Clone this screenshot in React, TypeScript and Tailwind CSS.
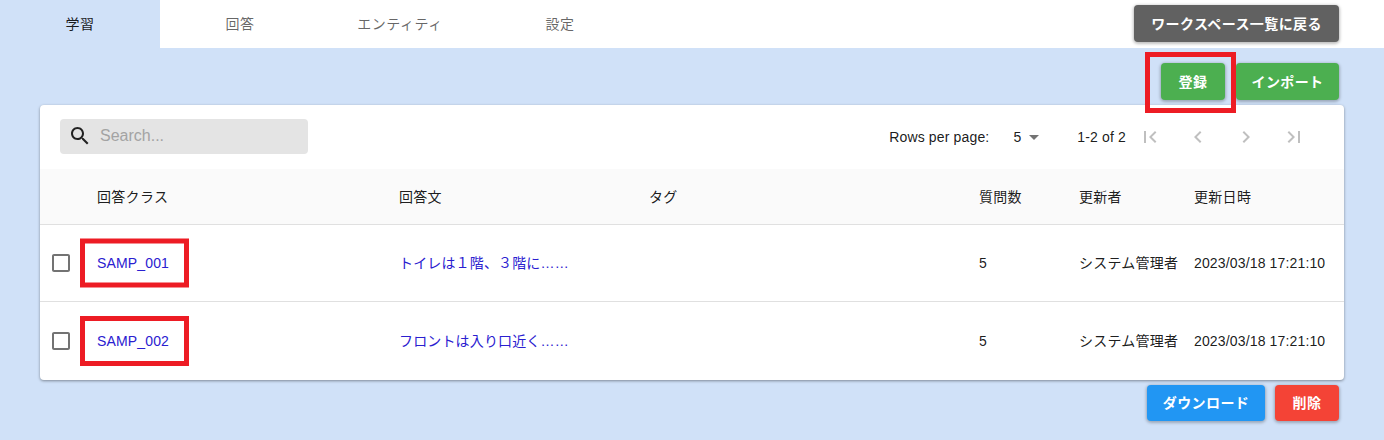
const FONT = "font-['Liberation_Sans','Noto_Sans_CJK_JP',sans-serif]";

const tabs = ["学習", "回答", "エンティティ", "設定"];

const columns = ["回答クラス", "回答文", "タグ", "質問数", "更新者", "更新日時"];

const rows = [
  { id: "SAMP_001", answer: "トイレは１階、３階に……", boxHeight: "h-[49px]" },
  { id: "SAMP_002", answer: "フロントは入り口近く……", boxHeight: "h-[50px]" },
];

const GRID = "grid grid-cols-[57px_302px_250px_330px_100px_115px_1fr] items-center";

function Icon({ d, className }: { d: string; className?: string }) {
  return (
    <svg viewBox="0 0 24 24" className={className} fill="currentColor">
      <path d={d} />
    </svg>
  );
}

const pagerIcons = [
  "M18.41 16.59L13.82 12l4.59-4.59L17 6l-6 6 6 6zM6 6h2v12H6z",
  "M15.41 7.41L14 6l-6 6 6 6 1.41-1.41L10.83 12z",
  "M10 6L8.59 7.41 13.17 12l-4.58 4.59L10 18l6-6z",
  "M5.59 7.41L10.18 12l-4.59 4.59L7 18l6-6-6-6zM16 6h2v12h-2z",
];

function Btn({ label, className }: { label: string; className: string }) {
  return (
    <button
      className={`rounded text-sm font-bold text-white tracking-[0.4px] shadow-[0_1px_3px_1px_rgba(0,0,0,0.25)] ${className}`}
    >
      {label}
    </button>
  );
}

export default function App() {
  return (
    <div className={`${FONT} h-[440px] overflow-hidden bg-[#d0e1f8] text-sm tracking-[0.01071em] text-black/90`}>
      {/* Tabs */}
      <div className="flex h-12 items-start justify-between bg-white pr-[45px]">
        <div className="flex">
          {tabs.map((t, i) => (
            <div
              key={t}
              className={`flex h-12 w-40 items-center justify-center pb-px tracking-[0.5px] ${
                i === 0 ? "bg-[#d0e1f8] text-black/90" : "text-black/60"
              }`}
            >
              {t}
            </div>
          ))}
        </div>
        <Btn label="ワークスペース一覧に戻る" className="mt-[5px] h-[37px] w-[205px] bg-[#616161]" />
      </div>

      {/* Actions */}
      <div className="flex justify-end gap-[11px] pr-[45px] pt-[15px]">
        <div className="relative">
          <Btn label="登録" className="h-[37px] w-16 bg-[#4caf50]" />
          <div className="absolute -left-[16px] -right-[11px] -top-[11px] h-[61px] border-[5px] border-[#ed1c24]" />
        </div>
        <Btn label="インポート" className="h-[37px] w-[103px] bg-[#4caf50]" />
      </div>

      {/* Table card */}
      <div className="ml-10 mr-10 mt-[5px] h-[275px] rounded bg-white shadow-[0_1px_3px_0_rgba(0,0,0,0.4)]">
        <div className="flex h-16 items-center justify-between pl-5 pr-[26px]">
          <div className="mb-0.5 flex h-[35px] w-[248px] items-center rounded bg-[#e4e4e4] pl-2">
            <Icon
              d="M15.5 14h-.79l-.28-.27C15.41 12.59 16 11.11 16 9.5 16 5.91 13.09 3 9.5 3S3 5.91 3 9.5 5.91 16 9.5 16c1.61 0 3.09-.59 4.23-1.57l.27.28v.79l5 4.99L20.49 19l-4.99-5zm-6 0C7.01 14 5 11.99 5 9.5S7.01 5 9.5 5 14 7.01 14 9.5 11.99 14 9.5 14z"
              className="h-6 w-6 text-black/85"
            />
            <span className="ml-2 text-base tracking-normal text-[#a3a3a3]">Search...</span>
          </div>
          <div className="flex items-center text-black/90">
            <span>Rows per page:</span>
            <span className="ml-6">5</span>
            <Icon d="M7 10l5 5 5-5z" className="ml-px h-6 w-6 text-black/55" />
            <span className="ml-[31px]">1-2 of 2</span>
            <div className="flex">
              {pagerIcons.map((d) => (
                <div key={d} className="flex h-12 w-12 items-center justify-center text-black/25">
                  <Icon d={d} className="h-6 w-6" />
                </div>
              ))}
            </div>
          </div>
        </div>

        <div className={`${GRID} h-14 border-b border-[#e0e0e0] bg-[#fafafa]`}>
          <div />
          {columns.map((c) => (
            <div key={c} className="tracking-[0.3px]">
              {c}
            </div>
          ))}
        </div>

        {rows.map((r, i) => (
          <div
            key={r.id}
            className={`${GRID} ${i === 0 ? "h-[77px] border-b border-[#e0e0e0]" : "h-[78px]"}`}
          >
            <div className="pl-[9px]">
              <Icon
                d="M19 5v14H5V5h14m0-2H5c-1.1 0-2 .9-2 2v14c0 1.1.9 2 2 2h14c1.1 0 2-.9 2-2V5c0-1.1-.9-2-2-2z"
                className="h-6 w-6 text-black/55"
              />
            </div>
            <div className="relative text-[#2a20d0]">
              {r.id}
              <div
                className={`absolute -left-[17px] top-1/2 w-[109px] -translate-y-1/2 border-[5px] border-[#ed1c24] ${r.boxHeight}`}
              />
            </div>
            <div className="tracking-[0.15px] text-[#2a20d0]">{r.answer}</div>
            <div />
            <div>5</div>
            <div className="tracking-[0.25px]">システム管理者</div>
            <div>2023/03/18 17:21:10</div>
          </div>
        ))}
      </div>

      {/* Footer actions */}
      <div className="flex justify-end gap-[10px] pr-[45px] pt-[5px]">
        <Btn label="ダウンロード" className="h-9 w-[118px] bg-[#2196f3]" />
        <Btn label="削除" className="h-9 w-16 bg-[#f44336]" />
      </div>
    </div>
  );
}
